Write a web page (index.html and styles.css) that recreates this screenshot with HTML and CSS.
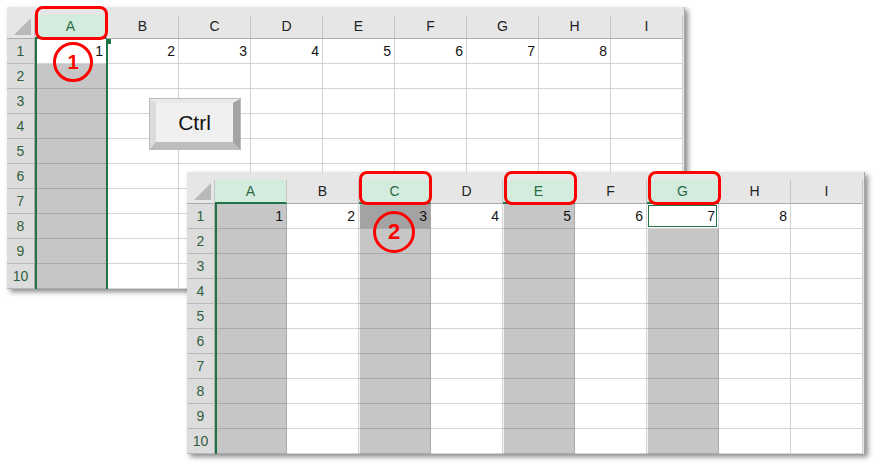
FILE: index.html
```html
<!DOCTYPE html>
<html>
    <head>
        <meta charset="utf-8">
        <meta name="viewport" content="initial-scale=1, width=device-width">
        <title>Ctrl column select</title>
        <link rel="stylesheet" href="styles.css">
    </head>
    <body>
    <div class="canvas">
        <div class="sheet one">
            <div class="grid">
                <div class="corner"><span></span></div>
                <div class="hd sel">A</div><div class="hd">B</div><div class="hd">C</div><div class="hd">D</div><div class="hd">E</div><div class="hd">F</div><div class="hd">G</div><div class="hd">H</div><div class="hd">I</div>

                <div class="rh">1</div><div class="c act">1</div><div class="c">2</div><div class="c">3</div><div class="c">4</div><div class="c">5</div><div class="c">6</div><div class="c">7</div><div class="c">8</div><div class="c"></div>
                <div class="rh">2</div><div class="c s"></div><div class="c"></div><div class="c"></div><div class="c"></div><div class="c"></div><div class="c"></div><div class="c"></div><div class="c"></div><div class="c"></div>
                <div class="rh">3</div><div class="c s"></div><div class="c"></div><div class="c"></div><div class="c"></div><div class="c"></div><div class="c"></div><div class="c"></div><div class="c"></div><div class="c"></div>
                <div class="rh">4</div><div class="c s"></div><div class="c"></div><div class="c"></div><div class="c"></div><div class="c"></div><div class="c"></div><div class="c"></div><div class="c"></div><div class="c"></div>
                <div class="rh">5</div><div class="c s"></div><div class="c"></div><div class="c"></div><div class="c"></div><div class="c"></div><div class="c"></div><div class="c"></div><div class="c"></div><div class="c"></div>
                <div class="rh">6</div><div class="c s"></div><div class="c"></div><div class="c"></div><div class="c"></div><div class="c"></div><div class="c"></div><div class="c"></div><div class="c"></div><div class="c"></div>
                <div class="rh">7</div><div class="c s"></div><div class="c"></div><div class="c"></div><div class="c"></div><div class="c"></div><div class="c"></div><div class="c"></div><div class="c"></div><div class="c"></div>
                <div class="rh">8</div><div class="c s"></div><div class="c"></div><div class="c"></div><div class="c"></div><div class="c"></div><div class="c"></div><div class="c"></div><div class="c"></div><div class="c"></div>
                <div class="rh">9</div><div class="c s"></div><div class="c"></div><div class="c"></div><div class="c"></div><div class="c"></div><div class="c"></div><div class="c"></div><div class="c"></div><div class="c"></div>
                <div class="rh">10</div><div class="c s"></div><div class="c"></div><div class="c"></div><div class="c"></div><div class="c"></div><div class="c"></div><div class="c"></div><div class="c"></div><div class="c"></div>
            </div>
            <div class="frame both"></div>
            <div class="handle"></div>
            <div class="key"><span>Ctrl</span></div>
            <div class="mark col-a"></div>
            <div class="circle no1">1</div>
        </div>

        <div class="sheet two">
            <div class="grid">
                <div class="corner"><span></span></div>
                <div class="hd sel">A</div><div class="hd">B</div><div class="hd sel">C</div><div class="hd">D</div><div class="hd sel">E</div><div class="hd">F</div><div class="hd sel">G</div><div class="hd">H</div><div class="hd">I</div>

                <div class="rh">1</div><div class="c s">1</div><div class="c">2</div><div class="c s dark">3</div><div class="c">4</div><div class="c s">5</div><div class="c">6</div><div class="c cur">7</div><div class="c">8</div><div class="c"></div>
                <div class="rh">2</div><div class="c s"></div><div class="c"></div><div class="c s"></div><div class="c"></div><div class="c s"></div><div class="c"></div><div class="c s"></div><div class="c"></div><div class="c"></div>
                <div class="rh">3</div><div class="c s"></div><div class="c"></div><div class="c s"></div><div class="c"></div><div class="c s"></div><div class="c"></div><div class="c s"></div><div class="c"></div><div class="c"></div>
                <div class="rh">4</div><div class="c s"></div><div class="c"></div><div class="c s"></div><div class="c"></div><div class="c s"></div><div class="c"></div><div class="c s"></div><div class="c"></div><div class="c"></div>
                <div class="rh">5</div><div class="c s"></div><div class="c"></div><div class="c s"></div><div class="c"></div><div class="c s"></div><div class="c"></div><div class="c s"></div><div class="c"></div><div class="c"></div>
                <div class="rh">6</div><div class="c s"></div><div class="c"></div><div class="c s"></div><div class="c"></div><div class="c s"></div><div class="c"></div><div class="c s"></div><div class="c"></div><div class="c"></div>
                <div class="rh">7</div><div class="c s"></div><div class="c"></div><div class="c s"></div><div class="c"></div><div class="c s"></div><div class="c"></div><div class="c s"></div><div class="c"></div><div class="c"></div>
                <div class="rh">8</div><div class="c s"></div><div class="c"></div><div class="c s"></div><div class="c"></div><div class="c s"></div><div class="c"></div><div class="c s"></div><div class="c"></div><div class="c"></div>
                <div class="rh">9</div><div class="c s"></div><div class="c"></div><div class="c s"></div><div class="c"></div><div class="c s"></div><div class="c"></div><div class="c s"></div><div class="c"></div><div class="c"></div>
                <div class="rh">10</div><div class="c s"></div><div class="c"></div><div class="c s"></div><div class="c"></div><div class="c s"></div><div class="c"></div><div class="c s"></div><div class="c"></div><div class="c"></div>
            </div>
            <div class="frame left"></div>
            <div class="mark col-c"></div>
            <div class="mark col-e"></div>
            <div class="mark col-g"></div>
            <div class="circle no2">2</div>
        </div>
    </div>
    </body>
</html>
```

FILE: styles.css
```css
body {
    margin: 0;
    background-color: #ffffff;
    font-family: "Liberation Sans", Arial, sans-serif;
}
.canvas {
    position: relative;
    width: 879px;
    height: 470px;
    overflow: hidden;
}
.sheet {
    position: absolute;
    width: 677px;
    padding-top: 8px;
    background-color: #e6e6e6;
    border-right: 1px solid #a6a6a6;
    box-shadow: 3px 3px 5px rgba(0, 0, 0, 0.45);
}
.one {
    left: 7px;
    top: 7px;
}
.two {
    left: 187px;
    top: 172px;
}
.grid {
    display: grid;
    grid-template-columns: 28px repeat(9, 72px);
    grid-auto-rows: 25px;
    grid-template-rows: 24px;
}
.corner {
    display: flex;
    align-items: flex-end;
    justify-content: flex-end;
    padding: 0 3px 3px 0;
    border-bottom: 1px solid #ababab;
    border-right: 1px solid #c4c4c4;
    box-sizing: border-box;
}
.corner span {
    width: 17px;
    height: 17px;
    background-color: #b8b8b8;
    clip-path: polygon(100% 0, 100% 100%, 0 100%);
}
.hd {
    box-sizing: border-box;
    border-right: 1px solid #c4c4c4;
    border-bottom: 1px solid #ababab;
    font-size: 14px;
    line-height: 23px;
    text-align: center;
    color: #222222;
}
.hd.sel {
    background-color: #d3ecdd;
    color: #2a6a45;
    border-bottom: 2px solid #217346;
}
.rh {
    box-sizing: border-box;
    background-color: #dcdcdc;
    border-bottom: 1px solid #b8b8b8;
    border-right: 1px solid #ababab;
    font-size: 14px;
    line-height: 24px;
    text-align: center;
    color: #31603c;
}
.c {
    box-sizing: border-box;
    background-color: #ffffff;
    border-right: 1px solid #d4d4d4;
    border-bottom: 1px solid #d4d4d4;
    font-size: 14px;
    line-height: 24px;
    text-align: right;
    padding-right: 3px;
    color: #111111;
}
.c.s {
    background-color: #c6c6c6;
    border-bottom-color: #a9a9a9;
    border-right-color: #a9a9a9;
    box-shadow: inset 1px 0 0 #f4f4f4;
}
.c.dark {
    background-color: #a3a3a3;
}
.c.act {
    background-color: #ffffff;
}
.c.cur {
    box-shadow: inset 0 0 0 1px #ffffff, inset 0 0 0 2px #217346;
}
.frame {
    position: absolute;
    left: 28px;
    top: 32px;
    width: 73px;
    height: 250px;
    box-sizing: border-box;
    border-left: 2px solid #217346;
}
.frame.both {
    border-right: 2px solid #217346;
}
.handle {
    position: absolute;
    left: 99px;
    top: 32px;
    width: 5px;
    height: 5px;
    background-color: #217346;
}
.mark {
    position: absolute;
    top: -1px;
    width: 73px;
    height: 34px;
    box-sizing: border-box;
    border: 3px solid #ff0000;
    border-radius: 8px;
}
.col-a { left: 28px; }
.col-c { left: 172px; }
.col-e { left: 317px; }
.col-g { left: 461px; }
.circle {
    position: absolute;
    display: flex;
    align-items: center;
    justify-content: center;
    box-sizing: border-box;
    border: 3px solid #ff0000;
    border-radius: 50%;
    color: #ff0000;
    font-weight: bold;
}
.no1 {
    left: 46px;
    top: 35px;
    width: 40px;
    height: 40px;
    font-size: 20px;
}
.no2 {
    left: 186px;
    top: 39px;
    width: 42px;
    height: 42px;
    font-size: 22px;
}
.key {
    position: absolute;
    left: 142px;
    top: 91px;
    width: 92px;
    height: 52px;
    box-sizing: border-box;
    border: 1px solid #bcbcbc;
    background-color: #f0f0f0;
}
.key span {
    display: flex;
    align-items: center;
    justify-content: center;
    height: 100%;
    box-sizing: border-box;
    border-style: solid;
    border-width: 4px 7px 7px 6px;
    border-color: #e9e9e9 #a4a4a4 #bdbdbd #dcdcdc;
    font-size: 21px;
    color: #111111;
}
```
